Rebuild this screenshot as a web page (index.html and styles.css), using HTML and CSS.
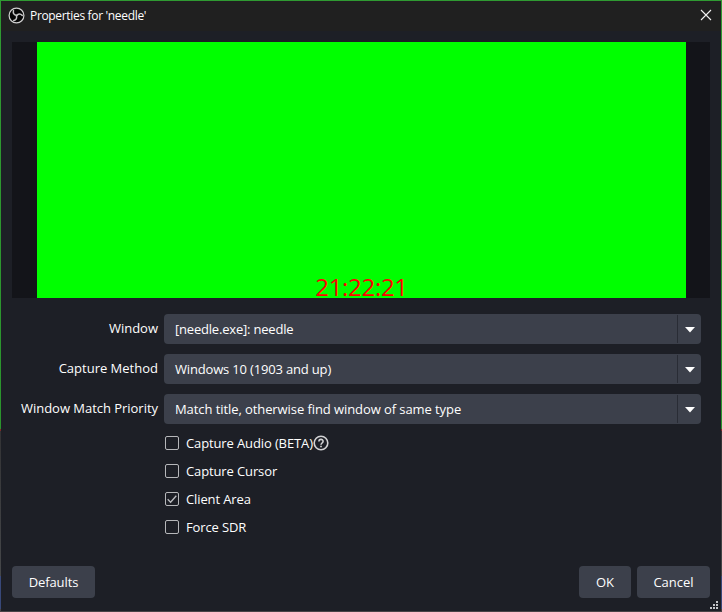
FILE: index.html
```html
<!DOCTYPE html>
<html lang="en">
<head>
<meta charset="utf-8">
<title>Properties for 'needle'</title>
<link rel="stylesheet" href="styles.css">
</head>
<body>
<div class="frame">
<main class="dialog">
  <header class="titlebar">
    <svg class="logo" width="17" height="17" viewBox="0 0 17 17">
      <circle cx="8.5" cy="8.5" r="7.4" fill="#050505" stroke="#d0d0d0" stroke-width="1.2"/>
      <g fill="none" stroke="#c4c4c4" stroke-width="1.5" stroke-linecap="round">
        <path d="M8.600 8.300C6 8 4.800 6.200 5.500 3.600"/>
        <path d="M8.600 8.300C6 8 4.800 6.200 5.500 3.600" transform="rotate(120 8.500 8.500)"/>
        <path d="M8.600 8.300C6 8 4.800 6.200 5.500 3.600" transform="rotate(240 8.500 8.500)"/>
      </g>
    </svg>
    <h1 class="title">Properties for 'needle'</h1>
    <svg class="close" width="12" height="12" viewBox="0 0 12 12"><path d="M1 1L11 11M11 1L1 11" stroke="#f2f2f2" stroke-width="1.1"/></svg>
  </header>
  <section class="preview"><div class="source"><span class="clock">21:22:21</span></div></section>
  <section class="form">
    <div class="row"><span class="label">Window</span><div class="combo"><span class="value v1">[needle.exe]: needle</span><span class="drop"><svg width="10" height="6" viewBox="0 0 10 6"><path d="M0 0H10L5 5.500Z" fill="#fff"/></svg></span></div></div>
    <div class="row"><span class="label">Capture Method</span><div class="combo"><span class="value v2">Windows 10 (1903 and up)</span><span class="drop"><svg width="10" height="6" viewBox="0 0 10 6"><path d="M0 0H10L5 5.500Z" fill="#fff"/></svg></span></div></div>
    <div class="row"><span class="label match">Window Match Priority</span><div class="combo"><span class="value v3">Match title, otherwise find window of same type</span><span class="drop"><svg width="10" height="6" viewBox="0 0 10 6"><path d="M0 0H10L5 5.500Z" fill="#fff"/></svg></span></div></div>
  </section>
  <section class="checks">
    <div class="check"><i class="box"></i><span>Capture Audio (BETA)</span><svg class="help" width="16" height="16" viewBox="0 0 16 16" fill="none" stroke="#d2d2d4"><circle cx="8" cy="8" r="6.800" stroke-width="1.600"/><path d="M5.900 6.500C5.900 3.700 10.100 3.700 10.100 6.300C10.100 8 8 8 8 9.800" stroke-width="1.600"/><path d="M8 10.800V12.300" stroke-width="1.700"/></svg></div>
    <div class="check"><i class="box"></i><span>Capture Cursor</span></div>
    <div class="check"><i class="box"><svg width="12" height="12" viewBox="0 0 12 12"><path d="M1.700 6.300L4.600 9.200L10.300 2.800" fill="none" stroke="#bcbdc0" stroke-width="1.300"/></svg></i><span>Client Area</span></div>
    <div class="check"><i class="box"></i><span>Force SDR</span></div>
  </section>
  <footer class="buttons">
    <button class="btn defaults">Defaults</button>
    <button class="btn ok">OK</button>
    <button class="btn cancel">Cancel</button>
  </footer>
  <svg class="grip" width="8" height="8" viewBox="0 0 8 8" fill="#c4c5c8"><path d="M6 0h2v2h-2zM3 3h2v2h-2zM6 3h2v2h-2zM0 6h2v2h-2zM3 6h2v2h-2zM6 6h2v2h-2z"/></svg>
</main>
</div>
</body>
</html>
```
FILE: styles.css
```css
* { box-sizing: border-box; }
body { margin: 0; width: 722px; height: 612px; overflow: hidden; font: 13px/18px "Open Sans", "Noto Sans", sans-serif; color: #fefefe; }
.frame { height: 612px; padding: 1px; background: linear-gradient(#2f9a32 0, #2b942d 429px, #7e2828 429px, #7e2828 431px, #333335 431px, #454749 576px, #384879 576px, #384879 609px, #484346 609px); }
.dialog { position: relative; height: 610px; display: flex; flex-direction: column; background: #1d1f26; }
.titlebar { height: 30px; flex: none; display: flex; align-items: center; padding: 0 9px 0 7px; background: #202020; }
.logo { flex: none; margin-top: -2px; }
.title { margin: -1px auto 0 5px; font-size: 12px; font-weight: 400; line-height: 18px; letter-spacing: -.33px; white-space: nowrap; }
.close { margin-top: -2px; }
.preview { height: 256px; flex: none; margin: 11px 11px 0; padding: 0 24px 0 25px; background: #131419; }
.source { height: 256px; display: flex; justify-content: center; align-items: flex-end; background: #0f0; }
.clock { color: #f00; font: 400 24px/22px "Open Sans", sans-serif; letter-spacing: -.3px; white-space: nowrap; }
.form { display: grid; gap: 10px; margin: 16px 20px 0 11px; }
.row { height: 30px; display: grid; grid-template-columns: 146px 537px; gap: 6px; }
.label { text-align: right; line-height: 28px; white-space: nowrap; }
.match { letter-spacing: -.03px; }
.combo { display: flex; align-items: center; border-radius: 4px; background: #3c404b; padding-left: 11px; }
.value { flex: 1; white-space: nowrap; }
.v1 { letter-spacing: -.2px; }
.v2 { letter-spacing: -.17px; }
.v3 { letter-spacing: -.08px; }
.drop { width: 24px; height: 28px; border-left: 1px solid #292c35; display: flex; align-items: center; justify-content: center; }
.drop svg { margin-top: 1px; }
.checks { margin: 5px 0 0 164px; }
.check { height: 28px; display: flex; align-items: center; letter-spacing: -.12px; white-space: nowrap; }
.box { width: 14px; height: 14px; margin-right: 7px; border: 1px solid #b6b7ba; border-radius: 2px; flex: none; }
.box svg { display: block; }
.buttons { display: flex; gap: 6px; margin: auto 11px 13px; }
.btn { height: 32px; padding: 0; border: 0; border-radius: 4px; background: #3c404b; color: inherit; font: inherit; }
.defaults { width: 83px; margin-right: auto; letter-spacing: -.1px; }
.ok { width: 52px; }
.cancel { width: 73px; }
.grip { position: absolute; right: 3px; bottom: 2px; }
```
